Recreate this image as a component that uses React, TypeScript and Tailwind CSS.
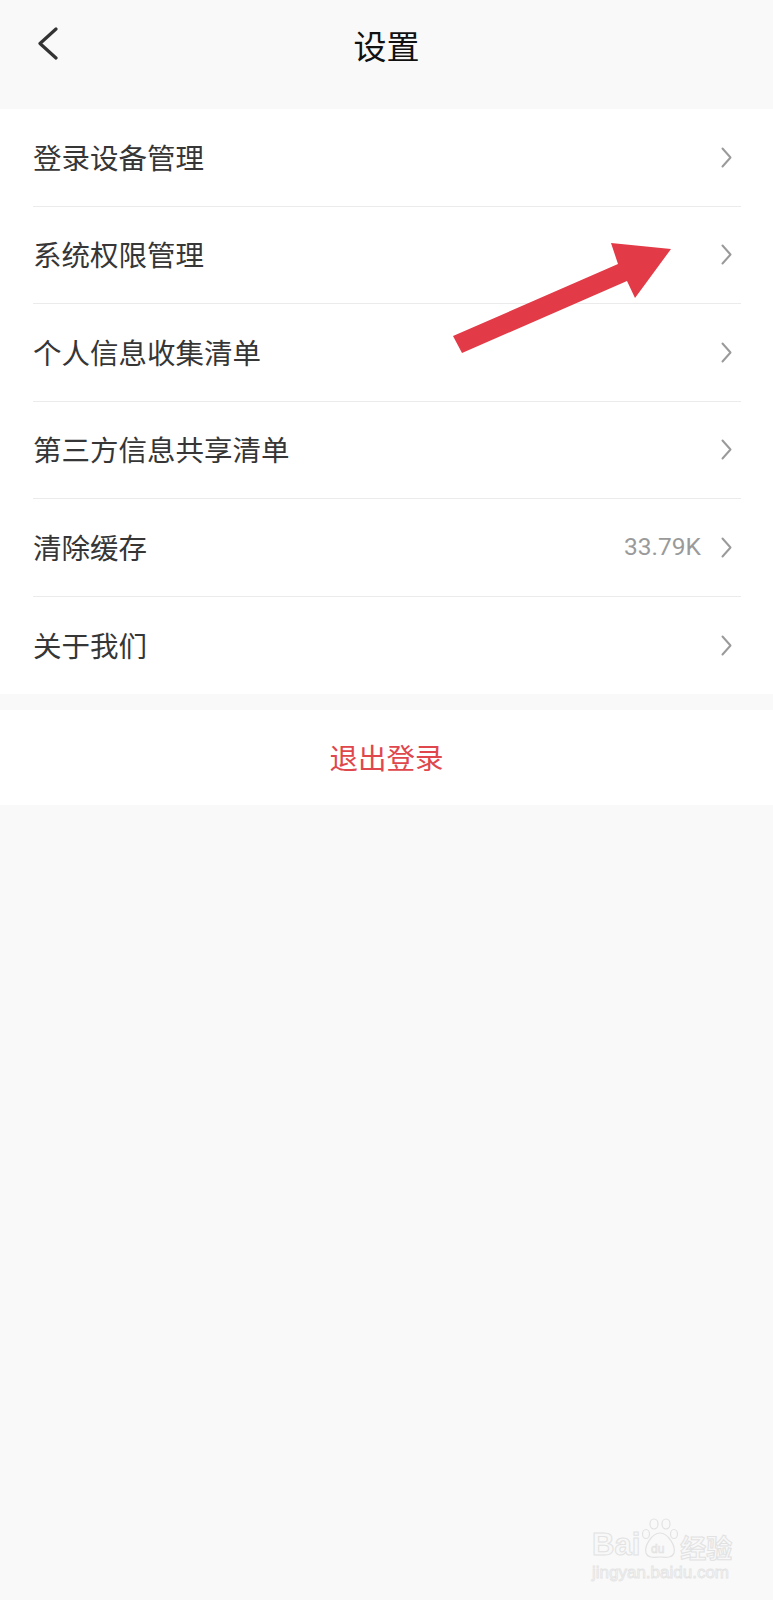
import React from 'react';

const items: { label: string; value?: string }[] = [
  { label: '登录设备管理' },
  { label: '系统权限管理' },
  { label: '个人信息收集清单' },
  { label: '第三方信息共享清单' },
  { label: '清除缓存', value: '33.79K' },
  { label: '关于我们' },
];

const Chevron: React.FC = () => (
  <svg width="11" height="21" viewBox="0 0 11 21" fill="none">
    <path d="M1.5 1.5 L9.5 10.5 L1.5 19.5" stroke="#9a9a9a" strokeWidth="2" strokeLinecap="round" strokeLinejoin="round" />
  </svg>
);

const cjk = "font-['Noto_Sans_CJK_SC','Noto_Sans',sans-serif]";

export default function App() {
  return (
    <div className={`relative min-h-[1600px] w-full bg-[#f9f9f9] ${cjk}`}>
      {/* 顶部栏 */}
      <div className="relative flex h-[92px] items-center justify-center">
        <button className="absolute left-[37px] top-[27px]">
          <svg width="22" height="33" viewBox="0 0 22 33" fill="none">
            <path d="M19 2 L3 16.5 L19 31" stroke="#333333" strokeWidth="3.2" strokeLinecap="round" strokeLinejoin="round" />
          </svg>
        </button>
        <h1 className="text-[33px] font-normal text-[#111111]">设置</h1>
      </div>

      {/* 设置列表 */}
      <div className="mt-[17px] bg-white">
        {items.map((item, i) => (
          <div key={item.label} className="pl-[33px] pr-[32px]">
            <div
              className={`flex h-[97.5px] items-center justify-between ${
                i < items.length - 1 ? 'border-b border-[#ebebeb]' : ''
              }`}
            >
              <span className="text-[28.5px] text-[#363636]">{item.label}</span>
              <div className="flex items-center gap-[20px] pr-[9px]">
                {item.value && (
                  <span className="font-['Roboto',sans-serif] text-[24.5px] text-[#9a9a9a]">{item.value}</span>
                )}
                <Chevron />
              </div>
            </div>
          </div>
        ))}
      </div>

      {/* 退出登录 */}
      <div className="mt-[16px] flex h-[95px] items-center justify-center bg-white">
        <span className="text-[28.5px] text-[#e0474c]">退出登录</span>
      </div>

      {/* 标注箭头 */}
      <svg className="pointer-events-none absolute left-0 top-0" width="773" height="400">
        <polygon
          points="453,336 618,264 611,243 671,249 635,298 627,281 462,353"
          fill="#e23a46"
        />
      </svg>

      {/* 水印 */}
      <div className="pointer-events-none absolute left-[592px] top-[1516px] flex flex-col items-start">
        <div className="flex items-end">
          <span className="font-['Liberation_Sans',sans-serif] text-[31px] font-bold leading-none text-[#f8f8f8] [-webkit-text-stroke:1px_#e2e2e2]">
            Bai
          </span>
          <svg width="40" height="44" viewBox="0 0 40 44" fill="none" stroke="#e2e2e2" strokeWidth="1.2">
            <ellipse cx="14" cy="8" rx="4" ry="5" />
            <ellipse cx="26" cy="8" rx="4" ry="5" />
            <ellipse cx="6" cy="18" rx="3.5" ry="4.5" />
            <ellipse cx="34" cy="18" rx="3.5" ry="4.5" />
            <path d="M20 17 C12 17 4 30 6 37 C8 43 16 41 20 41 C24 41 32 43 34 37 C36 30 28 17 20 17 Z" />
            <text x="11" y="37" fontSize="12" fontFamily="Liberation Sans" fill="#f0f0f0" stroke="#e2e2e2" strokeWidth="0.6">du</text>
          </svg>
          <span className="text-[26px] font-bold leading-none text-[#f8f8f8] [-webkit-text-stroke:1px_#e2e2e2]">经验</span>
        </div>
        <span className="mt-[4px] font-['Liberation_Sans',sans-serif] text-[17px] leading-none text-[#f6f6f6] [-webkit-text-stroke:0.8px_#e4e4e4]">
          jingyan.baidu.com
        </span>
      </div>
    </div>
  );
}
